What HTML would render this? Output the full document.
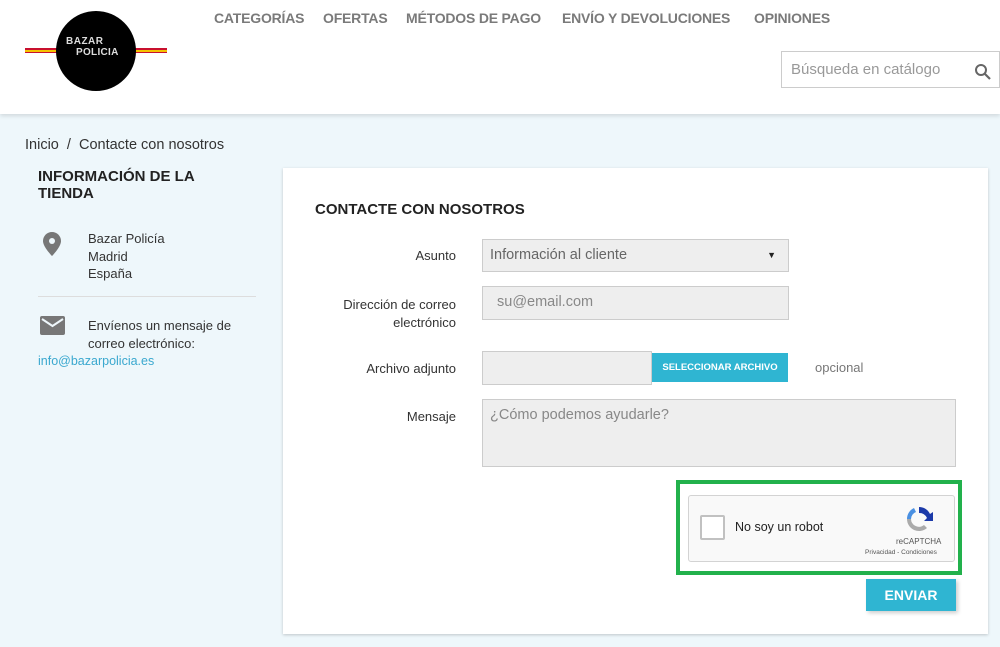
<!DOCTYPE html>
<html><head><meta charset="utf-8"><style>
*{box-sizing:border-box;margin:0;padding:0}
body{width:1000px;height:647px;overflow:hidden;background:#eef7fb;font-family:"Liberation Sans",sans-serif;color:#333;position:relative}
.hdr{position:absolute;left:0;top:0;width:1000px;height:114px;background:#fff;box-shadow:0 2px 4px rgba(0,0,0,.12)}
.a{position:absolute;white-space:nowrap}
.nav{top:10px;font-weight:bold;font-size:14px;color:#7a7a7a;letter-spacing:-.2px}
.lbl{font-size:13px;color:#333;text-align:right;width:200px}
.inp{position:absolute;background:#eee;border:1px solid #ccc;font-size:14.5px;color:#888;padding:7px 7px}
</style></head><body>
<div class="hdr">
 <div class="a" style="left:25px;top:48px;width:142px;height:5px;background:#c8102e"></div>
 <div class="a" style="left:25px;top:50px;width:142px;height:2px;background:#f4c300"></div>
 <div class="a" style="left:56px;top:11px;width:80px;height:80px;border-radius:50%;background:#000"></div>
 <div class="a" style="left:66px;top:36px;color:#ddd;font-size:10px;font-weight:bold;letter-spacing:.5px">BAZAR</div>
 <div class="a" style="left:76px;top:47px;color:#ddd;font-size:10px;font-weight:bold;letter-spacing:.3px">POLICIA</div>
 <div class="a nav" style="left:214px">CATEGORÍAS</div>
 <div class="a nav" style="left:323px">OFERTAS</div>
 <div class="a nav" style="left:406px">MÉTODOS DE PAGO</div>
 <div class="a nav" style="left:562px">ENVÍO Y DEVOLUCIONES</div>
 <div class="a nav" style="left:754px">OPINIONES</div>
 <div class="a" style="left:781px;top:51px;width:219px;height:37px;border:1px solid #ccc;background:#fff"></div>
 <div class="a" style="left:791px;top:61px;font-size:15px;color:#999">Búsqueda en catálogo</div>
 <svg class="a" style="left:974px;top:63px" width="18" height="18" viewBox="0 0 18 18"><circle cx="7" cy="7" r="5" fill="none" stroke="#666" stroke-width="2"/><line x1="11" y1="11" x2="16" y2="16" stroke="#666" stroke-width="2.2"/></svg>
</div>
<div class="a" style="left:25px;top:137px;font-size:14.5px;color:#333">Inicio &nbsp;/&nbsp; Contacte con nosotros</div>
<div class="a" style="left:38px;top:168px;font-size:15px;font-weight:bold;color:#222;line-height:17px">INFORMACIÓN DE LA<br>TIENDA</div>
<svg class="a" style="left:43px;top:232px" width="18" height="24" viewBox="0 0 18 24"><path d="M9 0C4 0 0 4 0 9c0 6 9 15 9 15s9-9 9-15c0-5-4-9-9-9z" fill="#777"/><circle cx="9" cy="9" r="3" fill="#eef7fb"/></svg>
<div class="a" style="left:88px;top:230px;font-size:13px;line-height:17.5px">Bazar Policía<br>Madrid<br>España</div>
<div class="a" style="left:38px;top:296px;width:218px;height:1px;background:#ddd"></div>
<svg class="a" style="left:40px;top:316px" width="25" height="19" viewBox="0 0 25 19"><rect width="25" height="19" rx="2" fill="#777"/><path d="M2 3l10.5 7L23 3" fill="none" stroke="#eef7fb" stroke-width="2"/></svg>
<div class="a" style="left:88px;top:317px;font-size:13px;line-height:17.5px">Envíenos un mensaje de<br>correo electrónico:</div>
<div class="a" style="left:38px;top:354px;font-size:12.5px;color:#3aa8cf">info@bazarpolicia.es</div>
<div class="a" style="left:283px;top:168px;width:705px;height:466px;background:#fff;box-shadow:0 1px 3px rgba(0,0,0,.2)"></div>
<div class="a" style="left:315px;top:201px;font-size:15px;font-weight:bold;color:#222">CONTACTE CON NOSOTROS</div>
<div class="a lbl" style="left:256px;top:248px">Asunto</div>
<div class="inp" style="left:482px;top:239px;width:307px;height:33px;color:#666">Información al cliente<span style="position:absolute;right:12px;top:10px;font-size:9px;color:#222">▼</span></div>
<div class="a lbl" style="left:256px;top:296px;line-height:18px">Dirección de correo<br>electrónico</div>
<div class="inp" style="left:482px;top:286px;width:307px;height:34px;padding-left:14px">su@email.com</div>
<div class="a lbl" style="left:256px;top:361px">Archivo adjunto</div>
<div class="inp" style="left:482px;top:351px;width:170px;height:34px"></div>
<div class="a" style="left:652px;top:353px;width:136px;height:29px;background:#2fb5d2;color:#fff;font-size:9.5px;font-weight:bold;text-align:center;line-height:29px">SELECCIONAR ARCHIVO</div>
<div class="a" style="left:815px;top:360px;font-size:13px;color:#777">opcional</div>
<div class="a lbl" style="left:256px;top:409px">Mensaje</div>
<div class="inp" style="left:482px;top:399px;width:474px;height:68px">¿Cómo podemos ayudarle?</div>
<div class="a" style="left:676px;top:480px;width:286px;height:95px;border:4px solid #22b14c"></div>
<div class="a" style="left:688px;top:495px;width:267px;height:67px;background:#f9f9f9;border:1px solid #d3d3d3;border-radius:3px"></div>
<div class="a" style="left:700px;top:515px;width:25px;height:25px;background:#fff;border:2px solid #c1c1c1;border-radius:2px"></div>
<div class="a" style="left:735px;top:520px;font-size:12.5px;color:#222">No soy un robot</div>
<svg class="a" style="left:905px;top:505px" width="28" height="28" viewBox="0 0 28 28"><path d="M14 2a12 12 0 0 1 11 7l3-2v9h-9l3-3a8 8 0 0 0-8-5z" fill="#1c3aa9"/><path d="M2 14a12 12 0 0 1 7-11l2 4A8 8 0 0 0 6 14z" fill="#4a90e2"/><path d="M2 14h4a8 8 0 0 0 13 6l3 3A12 12 0 0 1 2 14z" fill="#aaa"/></svg>
<div class="a" style="left:896px;top:537px;font-size:8px;color:#555">reCAPTCHA</div>
<div class="a" style="left:865px;top:549px;font-size:6.5px;color:#555">Privacidad - Condiciones</div>
<div class="a" style="left:866px;top:579px;width:90px;height:32px;background:#2fb5d2;color:#fff;font-weight:bold;font-size:14px;text-align:center;line-height:32px;box-shadow:2px 2px 4px rgba(0,0,0,.2)">ENVIAR</div>
</body></html>
